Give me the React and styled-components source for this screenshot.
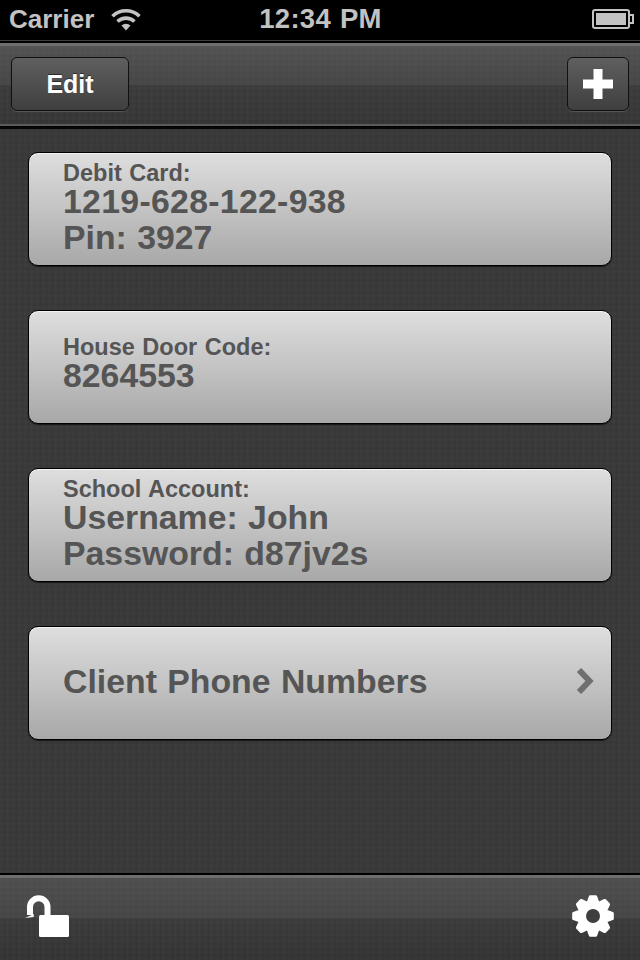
import React from 'react';
import styled, { createGlobalStyle } from 'styled-components';

const GlobalStyle = createGlobalStyle`
  html, body {
    margin: 0;
    padding: 0;
    background: #393939;
    font-family: "Liberation Sans", Arial, sans-serif;
  }
`;

const weave = `
  repeating-linear-gradient(90deg, rgba(255,255,255,0.006) 0 3px, rgba(0,0,0,0.016) 3px 6px),
  repeating-linear-gradient(0deg, rgba(255,255,255,0.006) 0 3px, rgba(0,0,0,0.016) 3px 6px)
`;

const Screen = styled.div`
  width: 640px;
  height: 960px;
  display: flex;
  flex-direction: column;
  overflow: hidden;
`;

const StatusBar = styled.div`
  height: 40px;
  flex: none;
  box-sizing: border-box;
  padding: 0 6px 2px 9px;
  display: grid;
  grid-template-columns: 1fr auto 1fr;
  align-items: center;
  background: #000;
  color: #c2c2c2;
  font-size: 26px;
  font-weight: 700;
`;

const Carrier = styled.div`
  display: flex;
  align-items: center;
  gap: 16px;
`;

const Clock = styled.div`
  font-size: 27.5px;
  letter-spacing: 0.3px;
  word-spacing: 1px;
  margin-right: 2px;
`;

const Battery = styled.div`
  justify-self: end;
  display: flex;
  margin-right: -1px;
`;

const NavBar = styled.div`
  height: 88px;
  flex: none;
  box-sizing: border-box;
  margin-top: 1px;
  padding: 14px 11px 0;
  display: flex;
  justify-content: space-between;
  align-items: flex-start;
  border-top: 2px solid #000;
  border-bottom: 3px solid #060606;
  box-shadow: inset 0 3px 0 #6e6e6e, inset 0 -2px 0 #5a5a5a;
  background: ${weave}, linear-gradient(#545454, #474747 50%, #3c3c3c 52%, #363636);
  position: relative;

  &::before {
    content: "";
    position: absolute;
    top: -3px;
    left: 0;
    right: 0;
    height: 1px;
    background: #3c3c3c;
  }
`;

const BarButton = styled.button`
  width: ${props => props.$width}px;
  height: 54px;
  padding: 0;
  display: flex;
  align-items: center;
  justify-content: center;
  border: 1px solid #111;
  border-radius: 6px;
  background: linear-gradient(#5f5f5f, #3f3f3f);
  box-shadow: 0 1px 0 rgba(255, 255, 255, 0.14);
  color: #fff;
  font-family: inherit;
  font-size: 25px;
  font-weight: 700;
  text-shadow: 0 -1px 0 rgba(0, 0, 0, 0.5);
`;

const Content = styled.div`
  flex: 1;
  box-sizing: border-box;
  padding: 23px 28px 0 28px;
  display: flex;
  flex-direction: column;
  gap: 44px;
  background: ${weave}, #393939;
`;

const Card = styled.div`
  height: 114px;
  flex: none;
  box-sizing: border-box;
  padding: 0 17px ${props => props.$lift}px 34px;
  display: flex;
  align-items: center;
  justify-content: space-between;
  border: 1px solid #000;
  border-radius: 10px;
  background: linear-gradient(#dedede, #a8a8a8);
  box-shadow: inset 0 1px 0 rgba(255, 255, 255, 0.6), 0 1px 1px rgba(0, 0, 0, 0.6);
  color: #555;
  font-weight: 700;
`;

const Lines = styled.div`
  display: flex;
  flex-direction: column;
`;

const Label = styled.div`
  font-size: 23.5px;
  line-height: 20px;
  word-spacing: 1px;
`;

const Value = styled.div`
  font-size: 33.8px;
  line-height: 36px;
  word-spacing: 1px;
  letter-spacing: ${props => props.$tracking || 0}px;
`;

const TabBar = styled.div`
  height: 87px;
  flex: none;
  box-sizing: border-box;
  padding: 19px 25px 0 25px;
  display: flex;
  justify-content: space-between;
  align-items: flex-start;
  border-top: 2px solid #000;
  box-shadow: inset 0 3px 0 #6e6e6e;
  background: ${weave}, linear-gradient(#505050, #474747 50%, #3c3c3c 52%, #343434);
`;

const WifiIcon = () => (
  <svg width="32" height="23" viewBox="0 0 32 23">
    <path d="M16 22.5 L11.5 17.5 A7 7 0 0 1 20.5 17.5 Z" fill="#c2c2c2" />
    <path d="M7.5 13.5 A12.5 12.5 0 0 1 24.5 13.5" fill="none" stroke="#c2c2c2" strokeWidth="3.6" />
    <path d="M2.5 8.2 A19.5 19.5 0 0 1 29.5 8.2" fill="none" stroke="#c2c2c2" strokeWidth="3.6" />
  </svg>
);

const BatteryIcon = () => (
  <svg width="43" height="20" viewBox="0 0 43 20">
    <rect x="1" y="1" width="36" height="18" rx="2" fill="none" stroke="#c2c2c2" strokeWidth="2" />
    <rect x="4" y="4" width="30" height="12" fill="#c2c2c2" />
    <path d="M38 6 H41 V14 H38" fill="none" stroke="#c2c2c2" strokeWidth="2" />
  </svg>
);

const PlusIcon = () => (
  <svg width="30" height="30" viewBox="0 0 30 30">
    <path d="M10.5 0 H19.5 V10.5 H30 V19.5 H19.5 V30 H10.5 V19.5 H0 V10.5 H10.5 Z" fill="#fff" />
  </svg>
);

const ChevronIcon = () => (
  <svg width="18" height="28" viewBox="0 0 18 28">
    <path d="M3 3 L13.5 14 L3 25" fill="none" stroke="#6f6f6f" strokeWidth="6" strokeLinejoin="miter" />
  </svg>
);

const LockIcon = () => (
  <svg width="46" height="46" viewBox="0 0 46 46">
    <path
      d="M5 21 V13 A8.75 8.75 0 0 1 22.5 13 V22"
      fill="none"
      stroke="#fff"
      strokeWidth="6"
    />
    <path d="M0 24 L9 20 L8.5 23 Z" fill="#fff" />
    <rect x="14" y="21" width="30" height="22" rx="1.5" fill="#fff" />
  </svg>
);

// 8 teeth, rounded off by the stroke
const gearPoints = Array.from({ length: 8 }, (_, i) => {
  const at = (deg, r) => {
    const a = ((i * 45 + deg - 90) * Math.PI) / 180;
    return `${(22 + r * Math.cos(a)).toFixed(2)} ${(22 + r * Math.sin(a)).toFixed(2)}`;
  };
  return `${at(-22.5, 13.5)} L${at(-8, 19.5)} L${at(8, 19.5)} L${at(22.5, 13.5)}`;
}).join(' L');

const GearIcon = () => (
  <svg width="44" height="44" viewBox="0 0 44 44">
    <path d={`M${gearPoints} Z`} fill="#fff" stroke="#fff" strokeWidth="3" strokeLinejoin="round" />
    <circle cx="22" cy="22" r="7" fill="#3f3f3f" />
  </svg>
);

const entries = [
  { label: 'Debit Card:', values: ['1219-628-122-938', 'Pin: 3927'], lift: 0, tracking: 0.3 },
  { label: 'House Door Code:', values: ['8264553'], lift: 5 },
  { label: 'School Account:', values: ['Username: John', 'Password: d87jv2s'], lift: 0 },
];

const App = () => (
  <Screen>
    <GlobalStyle />
    <StatusBar>
      <Carrier>
        Carrier
        <WifiIcon />
      </Carrier>
      <Clock>12:34 PM</Clock>
      <Battery>
        <BatteryIcon />
      </Battery>
    </StatusBar>
    <NavBar>
      <BarButton $width={118}>Edit</BarButton>
      <BarButton $width={62}>
        <PlusIcon />
      </BarButton>
    </NavBar>
    <Content>
      {entries.map(entry => (
        <Card key={entry.label} $lift={entry.lift}>
          <Lines>
            <Label>{entry.label}</Label>
            {entry.values.map((value, i) => (
              <Value key={value} $tracking={i === 0 ? entry.tracking : 0}>{value}</Value>
            ))}
          </Lines>
        </Card>
      ))}
      <Card $lift={4}>
        <Value>Client Phone Numbers</Value>
        <ChevronIcon />
      </Card>
    </Content>
    <TabBar>
      <LockIcon />
      <GearIcon />
    </TabBar>
  </Screen>
);

export default App;
